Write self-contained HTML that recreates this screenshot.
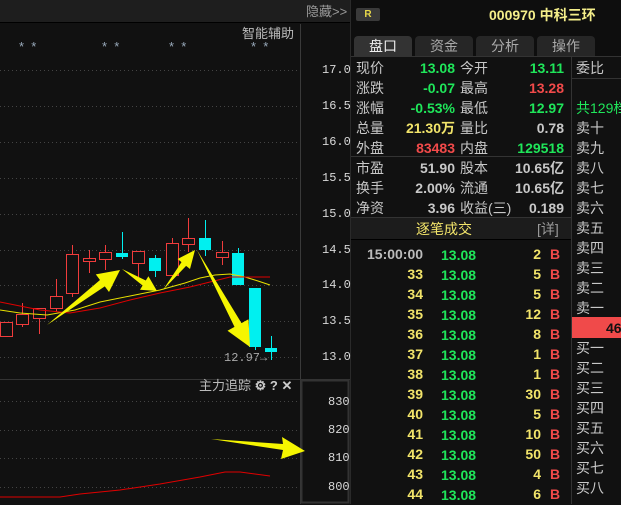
<!DOCTYPE html>
<html><head><meta charset="utf-8"><style>
*{margin:0;padding:0;box-sizing:border-box}
body{width:621px;height:504px;background:#111;overflow:hidden;position:relative;font-family:"Liberation Sans","Noto Sans CJK SC",sans-serif;font-size:14px;color:#c8c8c8}
.a{position:absolute;white-space:nowrap;line-height:20px}
.r{text-align:right}
.g{color:#1fe65a;font-weight:bold}
.y{color:#f2e46a;font-weight:bold}
.rd{color:#f24a4a;font-weight:bold}
.w{color:#c8c8c8;font-weight:bold}
.lb{color:#c8c8c8}
.ax{position:absolute;font-family:"Liberation Mono",monospace;font-size:12px;color:#d8d8d8;line-height:14px}
</style></head><body>
<div style="position:absolute;left:0;top:0;width:350px;height:23px;background:#1e1e1e;border-bottom:1px solid #000"></div>
<div class="a" style="left:306px;top:2px;color:#9a9a9a;font-size:13px">隐藏&gt;&gt;</div>
<div style="position:absolute;left:300px;top:24px;width:1px;height:480px;background:#3a3a3a"></div>
<div style="position:absolute;left:350px;top:0;width:1px;height:504px;background:#2a2a2a"></div>
<div class="a" style="left:242px;top:24px;color:#bbb;font-size:13px">智能辅助</div>
<div class="a" style="left:19px;top:37px;color:#9ab;font-size:13px">*&nbsp;&nbsp;*</div>
<div class="a" style="left:102px;top:37px;color:#9ab;font-size:13px">*&nbsp;&nbsp;*</div>
<div class="a" style="left:169px;top:37px;color:#9ab;font-size:13px">*&nbsp;&nbsp;*</div>
<div class="a" style="left:251px;top:37px;color:#9ab;font-size:13px">*&nbsp;&nbsp;*</div>
<div class="ax" style="left:322px;top:63px">17.0</div>
<div class="ax" style="left:322px;top:99px">16.5</div>
<div class="ax" style="left:322px;top:135px">16.0</div>
<div class="ax" style="left:322px;top:171px">15.5</div>
<div class="ax" style="left:322px;top:207px">15.0</div>
<div class="ax" style="left:322px;top:243px">14.5</div>
<div class="ax" style="left:322px;top:278px">14.0</div>
<div class="ax" style="left:322px;top:314px">13.5</div>
<div class="ax" style="left:322px;top:350px">13.0</div>
<div class="ax" style="left:224px;top:351px;color:#aaa">12.97→</div>
<svg style="position:absolute;left:0;top:0" width="350" height="504">
<g stroke="#444" stroke-dasharray="1 3" stroke-width="1">
<line x1="0" y1="70.5" x2="298" y2="70.5"/><line x1="0" y1="106.5" x2="298" y2="106.5"/><line x1="0" y1="142.5" x2="298" y2="142.5"/><line x1="0" y1="178.5" x2="298" y2="178.5"/><line x1="0" y1="214.5" x2="298" y2="214.5"/><line x1="0" y1="250.5" x2="298" y2="250.5"/><line x1="0" y1="285.5" x2="298" y2="285.5"/><line x1="0" y1="321.5" x2="298" y2="321.5"/><line x1="0" y1="357.5" x2="298" y2="357.5"/>
<line x1="0" y1="401.5" x2="298" y2="401.5"/><line x1="0" y1="430.5" x2="298" y2="430.5"/><line x1="0" y1="458.5" x2="298" y2="458.5"/><line x1="0" y1="487.5" x2="298" y2="487.5"/>
</g>
<line x1="0" y1="379.5" x2="350" y2="379.5" stroke="#333"/>
<rect x="301.5" y="380.5" width="47" height="122" fill="none" stroke="#333" stroke-width="2"/>
<g stroke="#f03c3c" fill="none" stroke-width="1">
<rect x="0.5" y="322.5" width="12" height="14"/>
<line x1="22.5" y1="303" x2="22.5" y2="327"/><rect x="16.5" y="314.5" width="12" height="10" fill="#111"/>
<line x1="39.5" y1="308" x2="39.5" y2="334"/><rect x="33.5" y="308.5" width="12" height="10" fill="#111"/>
<line x1="56.5" y1="279" x2="56.5" y2="312"/><rect x="50.5" y="296.5" width="12" height="12" fill="#111"/>
<line x1="72.5" y1="245" x2="72.5" y2="297"/><rect x="66.5" y="254.5" width="12" height="39" fill="#111"/>
<line x1="89.5" y1="250" x2="89.5" y2="273"/><rect x="83.5" y="258.5" width="12" height="3" fill="#111"/>
<line x1="105.5" y1="245" x2="105.5" y2="270"/><rect x="99.5" y="252.5" width="12" height="7" fill="#111"/>
<line x1="138.5" y1="263" x2="138.5" y2="277"/><rect x="132.5" y="251.5" width="12" height="12" fill="#111"/>
<line x1="172.5" y1="238" x2="172.5" y2="243"/><rect x="166.5" y="243.5" width="12" height="32" fill="#111"/>
<line x1="188.5" y1="218" x2="188.5" y2="252"/><rect x="182.5" y="238.5" width="12" height="6" fill="#111"/>
<line x1="222.5" y1="241" x2="222.5" y2="265"/><rect x="216.5" y="252.5" width="12" height="5" fill="#111"/>
</g>
<g fill="#00f0f0" stroke="#00f0f0">
<line x1="122.5" y1="232" x2="122.5" y2="259"/><rect x="116" y="253" width="12" height="4" stroke="none"/>
<line x1="155.5" y1="255" x2="155.5" y2="277"/><rect x="149" y="258" width="12" height="13" stroke="none"/>
<line x1="205.5" y1="220" x2="205.5" y2="256"/><rect x="199" y="238" width="12" height="12" stroke="none"/>
<line x1="238.5" y1="248" x2="238.5" y2="253"/><rect x="232" y="253" width="12" height="32" stroke="none"/>
<line x1="255.5" y1="347" x2="255.5" y2="350"/><rect x="249" y="288" width="12" height="59" stroke="none"/>
<line x1="271.5" y1="336" x2="271.5" y2="360"/><rect x="265" y="348" width="12" height="4" stroke="none"/>
</g>
<polyline fill="none" stroke="#e8e000" stroke-width="1" points="0,310 20,313 47,315 75,310 100,302 130,296 160,290 185,283 200,278 215,275 230,274 245,277 258,281 270,285"/>
<polyline fill="none" stroke="#e00000" stroke-width="1" points="0,302 20,306 40,310 70,313 100,308 130,300 160,293 190,287 210,282 230,277 250,277 270,277"/>
<polyline fill="none" stroke="#e00000" stroke-width="1" points="0,497 60,497 80,494 120,490 160,484 200,477 225,472 240,472 255,474 270,476"/>
<g fill="#f5f500">
<polygon points="47,325 100,280 95.8,274.4 120,270 109,292 104.8,286.4"/>
<polygon points="122,269 145.8,280.5 148.4,276.2 157,291 140,289.8 142.6,285.5"/>
<polygon points="163,290 181.5,262.1 177.6,259 195,250 190,269 186.1,265.9"/>
<polygon points="197,250 241.5,323.1 248.5,319.2 250,347 227.5,330.8 234.5,326.9"/>
<polygon points="211,439 283,444 282,437 305,451 281,459 283,450"/>
</g>
</svg>
<div class="a" style="left:199px;top:376px;color:#bbb;font-size:13px">主力追踪 <b style="color:#ccc">⚙ ? ✕</b></div>
<div class="ax" style="left:328px;top:395px">830</div>
<div class="ax" style="left:328px;top:423px">820</div>
<div class="ax" style="left:328px;top:451px">810</div>
<div class="ax" style="left:328px;top:480px">800</div>

<div style="position:absolute;left:351px;top:0;width:270px;height:56px;background:#0e0e0e"></div>
<div style="position:absolute;left:356px;top:8px;width:24px;height:13px;background:#3a3a3a;border-radius:2px;color:#e8d84a;font-size:10px;font-weight:bold;text-align:center;line-height:13px">R</div>
<div class="a" style="left:489px;top:5px;color:#f4ee8a;font-weight:bold;font-size:14px">000970 中科三环</div>
<div style="position:absolute;left:354px;top:36px;width:58px;height:21px;background:#333;border-radius:4px 4px 0 0;color:#eee;text-align:center;line-height:21px">盘口</div>
<div style="position:absolute;left:415px;top:36px;width:58px;height:21px;background:#262626;border-radius:4px 4px 0 0;color:#aaa;text-align:center;line-height:21px">资金</div>
<div style="position:absolute;left:476px;top:36px;width:58px;height:21px;background:#262626;border-radius:4px 4px 0 0;color:#aaa;text-align:center;line-height:21px">分析</div>
<div style="position:absolute;left:537px;top:36px;width:58px;height:21px;background:#262626;border-radius:4px 4px 0 0;color:#aaa;text-align:center;line-height:21px">操作</div>
<div style="position:absolute;left:351px;top:56px;width:270px;height:1px;background:#333"></div>
<div style="position:absolute;left:571px;top:57px;width:1px;height:447px;background:#333"></div>
<div style="position:absolute;left:351px;top:156px;width:220px;height:1px;background:#333"></div>
<div style="position:absolute;left:351px;top:217px;width:220px;height:23px;background:#1c1c1c;border-top:1px solid #333;border-bottom:1px solid #000"></div>
<div class="a" style="left:416px;top:219px;color:#f2e46a">逐笔成交</div>
<div class="a" style="left:537px;top:219px;color:#999">[详]</div>

<div class="a lb" style="left:356px;top:58px">现价</div><div class="a r g" style="left:380px;width:75px;top:58px">13.08</div><div class="a lb" style="left:460px;top:58px">今开</div><div class="a r g" style="left:490px;width:74px;top:58px">13.11</div>
<div class="a lb" style="left:356px;top:78px">涨跌</div><div class="a r g" style="left:380px;width:75px;top:78px">-0.07</div><div class="a lb" style="left:460px;top:78px">最高</div><div class="a r rd" style="left:490px;width:74px;top:78px">13.28</div>
<div class="a lb" style="left:356px;top:98px">涨幅</div><div class="a r g" style="left:380px;width:75px;top:98px">-0.53%</div><div class="a lb" style="left:460px;top:98px">最低</div><div class="a r g" style="left:490px;width:74px;top:98px">12.97</div>
<div class="a lb" style="left:356px;top:118px">总量</div><div class="a r y" style="left:380px;width:75px;top:118px">21.30万</div><div class="a lb" style="left:460px;top:118px">量比</div><div class="a r w" style="left:490px;width:74px;top:118px">0.78</div>
<div class="a lb" style="left:356px;top:138px">外盘</div><div class="a r rd" style="left:380px;width:75px;top:138px">83483</div><div class="a lb" style="left:460px;top:138px">内盘</div><div class="a r g" style="left:490px;width:74px;top:138px">129518</div>
<div class="a lb" style="left:356px;top:158px">市盈</div><div class="a r w" style="left:380px;width:75px;top:158px">51.90</div><div class="a lb" style="left:460px;top:158px">股本</div><div class="a r w" style="left:490px;width:74px;top:158px">10.65亿</div>
<div class="a lb" style="left:356px;top:178px">换手</div><div class="a r w" style="left:380px;width:75px;top:178px">2.00%</div><div class="a lb" style="left:460px;top:178px">流通</div><div class="a r w" style="left:490px;width:74px;top:178px">10.65亿</div>
<div class="a lb" style="left:356px;top:198px">净资</div><div class="a r w" style="left:380px;width:75px;top:198px">3.96</div><div class="a lb" style="left:460px;top:198px">收益(三)</div><div class="a r w" style="left:500px;width:64px;top:198px">0.189</div>

<div class="a w" style="left:367px;top:244px;color:#bbb">15:00:00</div>
<div class="a g" style="left:441px;top:245px">13.08</div><div class="a r y" style="left:500px;width:41px;top:244px">2</div><div class="a rd" style="left:550px;top:244px">B</div>
<div class="a r y" style="left:390px;width:33px;top:264px">33</div><div class="a g" style="left:441px;top:265px">13.08</div><div class="a r y" style="left:500px;width:41px;top:264px">5</div><div class="a rd" style="left:550px;top:264px">B</div>
<div class="a r y" style="left:390px;width:33px;top:284px">34</div><div class="a g" style="left:441px;top:285px">13.08</div><div class="a r y" style="left:500px;width:41px;top:284px">5</div><div class="a rd" style="left:550px;top:284px">B</div>
<div class="a r y" style="left:390px;width:33px;top:304px">35</div><div class="a g" style="left:441px;top:305px">13.08</div><div class="a r y" style="left:500px;width:41px;top:304px">12</div><div class="a rd" style="left:550px;top:304px">B</div>
<div class="a r y" style="left:390px;width:33px;top:324px">36</div><div class="a g" style="left:441px;top:325px">13.08</div><div class="a r y" style="left:500px;width:41px;top:324px">8</div><div class="a rd" style="left:550px;top:324px">B</div>
<div class="a r y" style="left:390px;width:33px;top:344px">37</div><div class="a g" style="left:441px;top:345px">13.08</div><div class="a r y" style="left:500px;width:41px;top:344px">1</div><div class="a rd" style="left:550px;top:344px">B</div>
<div class="a r y" style="left:390px;width:33px;top:364px">38</div><div class="a g" style="left:441px;top:365px">13.08</div><div class="a r y" style="left:500px;width:41px;top:364px">1</div><div class="a rd" style="left:550px;top:364px">B</div>
<div class="a r y" style="left:390px;width:33px;top:384px">39</div><div class="a g" style="left:441px;top:385px">13.08</div><div class="a r y" style="left:500px;width:41px;top:384px">30</div><div class="a rd" style="left:550px;top:384px">B</div>
<div class="a r y" style="left:390px;width:33px;top:404px">40</div><div class="a g" style="left:441px;top:405px">13.08</div><div class="a r y" style="left:500px;width:41px;top:404px">5</div><div class="a rd" style="left:550px;top:404px">B</div>
<div class="a r y" style="left:390px;width:33px;top:424px">41</div><div class="a g" style="left:441px;top:425px">13.08</div><div class="a r y" style="left:500px;width:41px;top:424px">10</div><div class="a rd" style="left:550px;top:424px">B</div>
<div class="a r y" style="left:390px;width:33px;top:444px">42</div><div class="a g" style="left:441px;top:445px">13.08</div><div class="a r y" style="left:500px;width:41px;top:444px">50</div><div class="a rd" style="left:550px;top:444px">B</div>
<div class="a r y" style="left:390px;width:33px;top:464px">43</div><div class="a g" style="left:441px;top:465px">13.08</div><div class="a r y" style="left:500px;width:41px;top:464px">4</div><div class="a rd" style="left:550px;top:464px">B</div>
<div class="a r y" style="left:390px;width:33px;top:484px">44</div><div class="a g" style="left:441px;top:485px">13.08</div><div class="a r y" style="left:500px;width:41px;top:484px">6</div><div class="a rd" style="left:550px;top:484px">B</div>

<div class="a lb" style="left:576px;top:58px">委比</div>
<div style="position:absolute;left:572px;top:78px;width:49px;height:1px;background:#333"></div>
<div class="a" style="left:576px;top:98px;color:#1fe65a">共129档</div>
<div class="a lb" style="left:576px;top:118px">卖十</div>
<div class="a lb" style="left:576px;top:138px">卖九</div>
<div class="a lb" style="left:576px;top:158px">卖八</div>
<div class="a lb" style="left:576px;top:178px">卖七</div>
<div class="a lb" style="left:576px;top:198px">卖六</div>
<div class="a lb" style="left:576px;top:218px">卖五</div>
<div class="a lb" style="left:576px;top:238px">卖四</div>
<div class="a lb" style="left:576px;top:258px">卖三</div>
<div class="a lb" style="left:576px;top:278px">卖二</div>
<div class="a lb" style="left:576px;top:298px">卖一</div>
<div style="position:absolute;left:572px;top:317px;width:49px;height:21px;background:#f04a4a"></div>
<div class="a" style="left:606px;top:318px;color:#111;font-weight:bold">46</div>
<div class="a lb" style="left:576px;top:338px">买一</div>
<div class="a lb" style="left:576px;top:358px">买二</div>
<div class="a lb" style="left:576px;top:378px">买三</div>
<div class="a lb" style="left:576px;top:398px">买四</div>
<div class="a lb" style="left:576px;top:418px">买五</div>
<div class="a lb" style="left:576px;top:438px">买六</div>
<div class="a lb" style="left:576px;top:458px">买七</div>
<div class="a lb" style="left:576px;top:478px">买八</div>
</body></html>
